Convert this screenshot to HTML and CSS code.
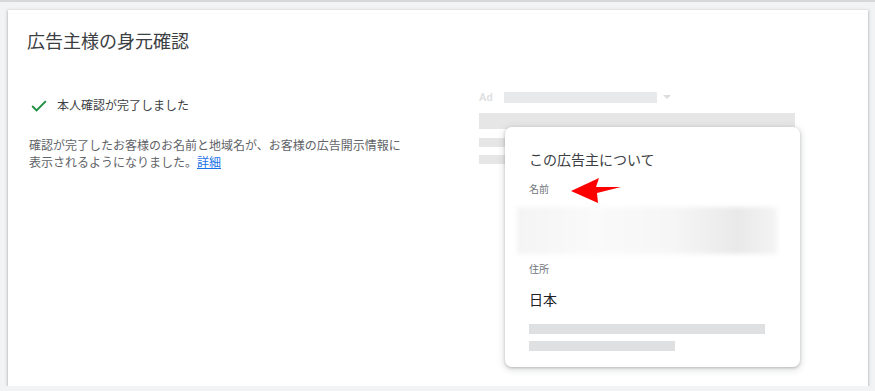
FILE: index.html
```html
<!DOCTYPE html>
<html lang="ja">
<head>
    <meta charset="UTF-8">
    <title>広告主様の身元確認</title>
    <link rel="stylesheet" href="styles.css">
</head>
<body>
    <div class="panel">
        <h1 class="panel-title">広告主様の身元確認</h1>

        <div class="content">
            <div class="status-col">
                <div class="status-row">
                    <svg class="check" width="16" height="12" viewBox="0 0 16 12">
                        <polyline points="1.2,6 5.6,10.4 14.8,1.2" fill="none" stroke="#1e8e3e" stroke-width="1.9"/>
                    </svg>
                    <span>本人確認が完了しました</span>
                </div>
                <p class="status-text">確認が完了したお客様のお名前と地域名が、お客様の広告開示情報に<br>表示されるようになりました。<a href="#" class="more-link">詳細</a></p>
            </div>

            <div class="preview">
                <div class="ad-row">
                    <span class="ad-label">Ad</span>
                    <span class="ad-url"></span>
                    <span class="ad-caret"></span>
                </div>
                <div class="ad-headline"></div>
                <div class="ad-line"></div>
                <div class="ad-line"></div>

                <div class="about-card">
                    <div class="about-title">この広告主について</div>
                    <div class="field-label">名前</div>
                    <svg class="arrow" width="52" height="26" viewBox="0 0 52 26">
                        <polygon points="0,13 28,0 25,9 50,9 26,15 27,25" fill="#ff0000"/>
                    </svg>
                    <div class="name-blur"></div>
                    <div class="field-label address-label">住所</div>
                    <div class="field-value">日本</div>
                    <div class="bar bar-long"></div>
                    <div class="bar bar-short"></div>
                </div>
            </div>
        </div>
    </div>
</body>
</html>
```

FILE: styles.css
```css
body {
    margin: 0;
    background-color: #f1f3f4;
    border-top: 2px solid #d6d8da;
    font-family: Roboto, "Noto Sans CJK JP", sans-serif;
    color: #3c4043;
}

.panel {
    margin: 8px 7px 0 8px;
    height: 376px;
    box-sizing: border-box;
    padding: 21px 19px;
    background-color: #fff;
    box-shadow: 0 1px 2px rgba(60, 64, 67, 0.3), 0 1px 3px 1px rgba(60, 64, 67, 0.15);
}

.panel-title {
    margin: 0;
    font-size: 18px;
    line-height: 22px;
    font-weight: 400;
    color: #3c4043;
}

.content {
    display: flex;
    margin-top: 35px;
}

.status-col {
    width: 372px;
    margin-right: 78px;
    padding-left: 2px;
}

.status-row {
    display: flex;
    align-items: center;
    gap: 10px;
    margin-top: 9px;
    padding-left: 2px;
    font-size: 12px;
    line-height: 18px;
    color: #3c4043;
}

.status-text {
    margin: 23px 0 0;
    font-size: 12px;
    line-height: 17px;
    color: #5f6368;
}

.more-link {
    color: #1a73e8;
}

.preview {
    position: relative;
    width: 320px;
    padding-top: 3px;
}

.ad-row {
    display: flex;
    align-items: center;
    height: 12px;
}

.ad-label {
    width: 25px;
    font-size: 11px;
    font-weight: 700;
    color: #dfe1e3;
}

.ad-url {
    width: 153px;
    height: 11px;
    background-color: #e8e9ea;
}

.ad-caret {
    margin-left: 6px;
    border-left: 4px solid transparent;
    border-right: 4px solid transparent;
    border-top: 4px solid #dcdcdc;
}

.ad-headline {
    width: 316px;
    height: 16px;
    margin-top: 10px;
    background-color: #e6e6e6;
}

.ad-line {
    width: 60px;
    height: 9px;
    margin-top: 9px;
    background-color: #e6e6e6;
}

.ad-line + .ad-line {
    margin-top: 8px;
}

.about-card {
    position: absolute;
    left: 26px;
    top: 39px;
    width: 295px;
    box-sizing: border-box;
    padding: 23px 24px 16px;
    background-color: #fff;
    border-radius: 7px;
    box-shadow: 0 1px 3px rgba(60, 64, 67, 0.3), 0 2px 6px 2px rgba(60, 64, 67, 0.12);
}

.about-title {
    font-size: 14px;
    line-height: 20px;
    color: #3c4043;
}

.field-label {
    margin-top: 13px;
    font-size: 10px;
    line-height: 14px;
    color: #70757a;
}

.arrow {
    position: absolute;
    left: 66px;
    top: 51px;
}

.name-blur {
    width: 260px;
    height: 47px;
    margin: 10px 0 0 -12px;
    background: linear-gradient(90deg, #f4f4f4 0%, #fafafa 30%, #f6f6f6 60%, #e9e9e9 85%, #f4f4f4 100%);
    filter: blur(2px);
}

.address-label {
    margin-top: 9px;
}

.field-value {
    margin-top: 13px;
    font-size: 14px;
    line-height: 20px;
    color: #202124;
}

.bar {
    height: 10px;
    background-color: #dfe0e2;
}

.bar-long {
    width: 236px;
    margin-top: 14px;
}

.bar-short {
    width: 146px;
    margin-top: 7px;
}
```
